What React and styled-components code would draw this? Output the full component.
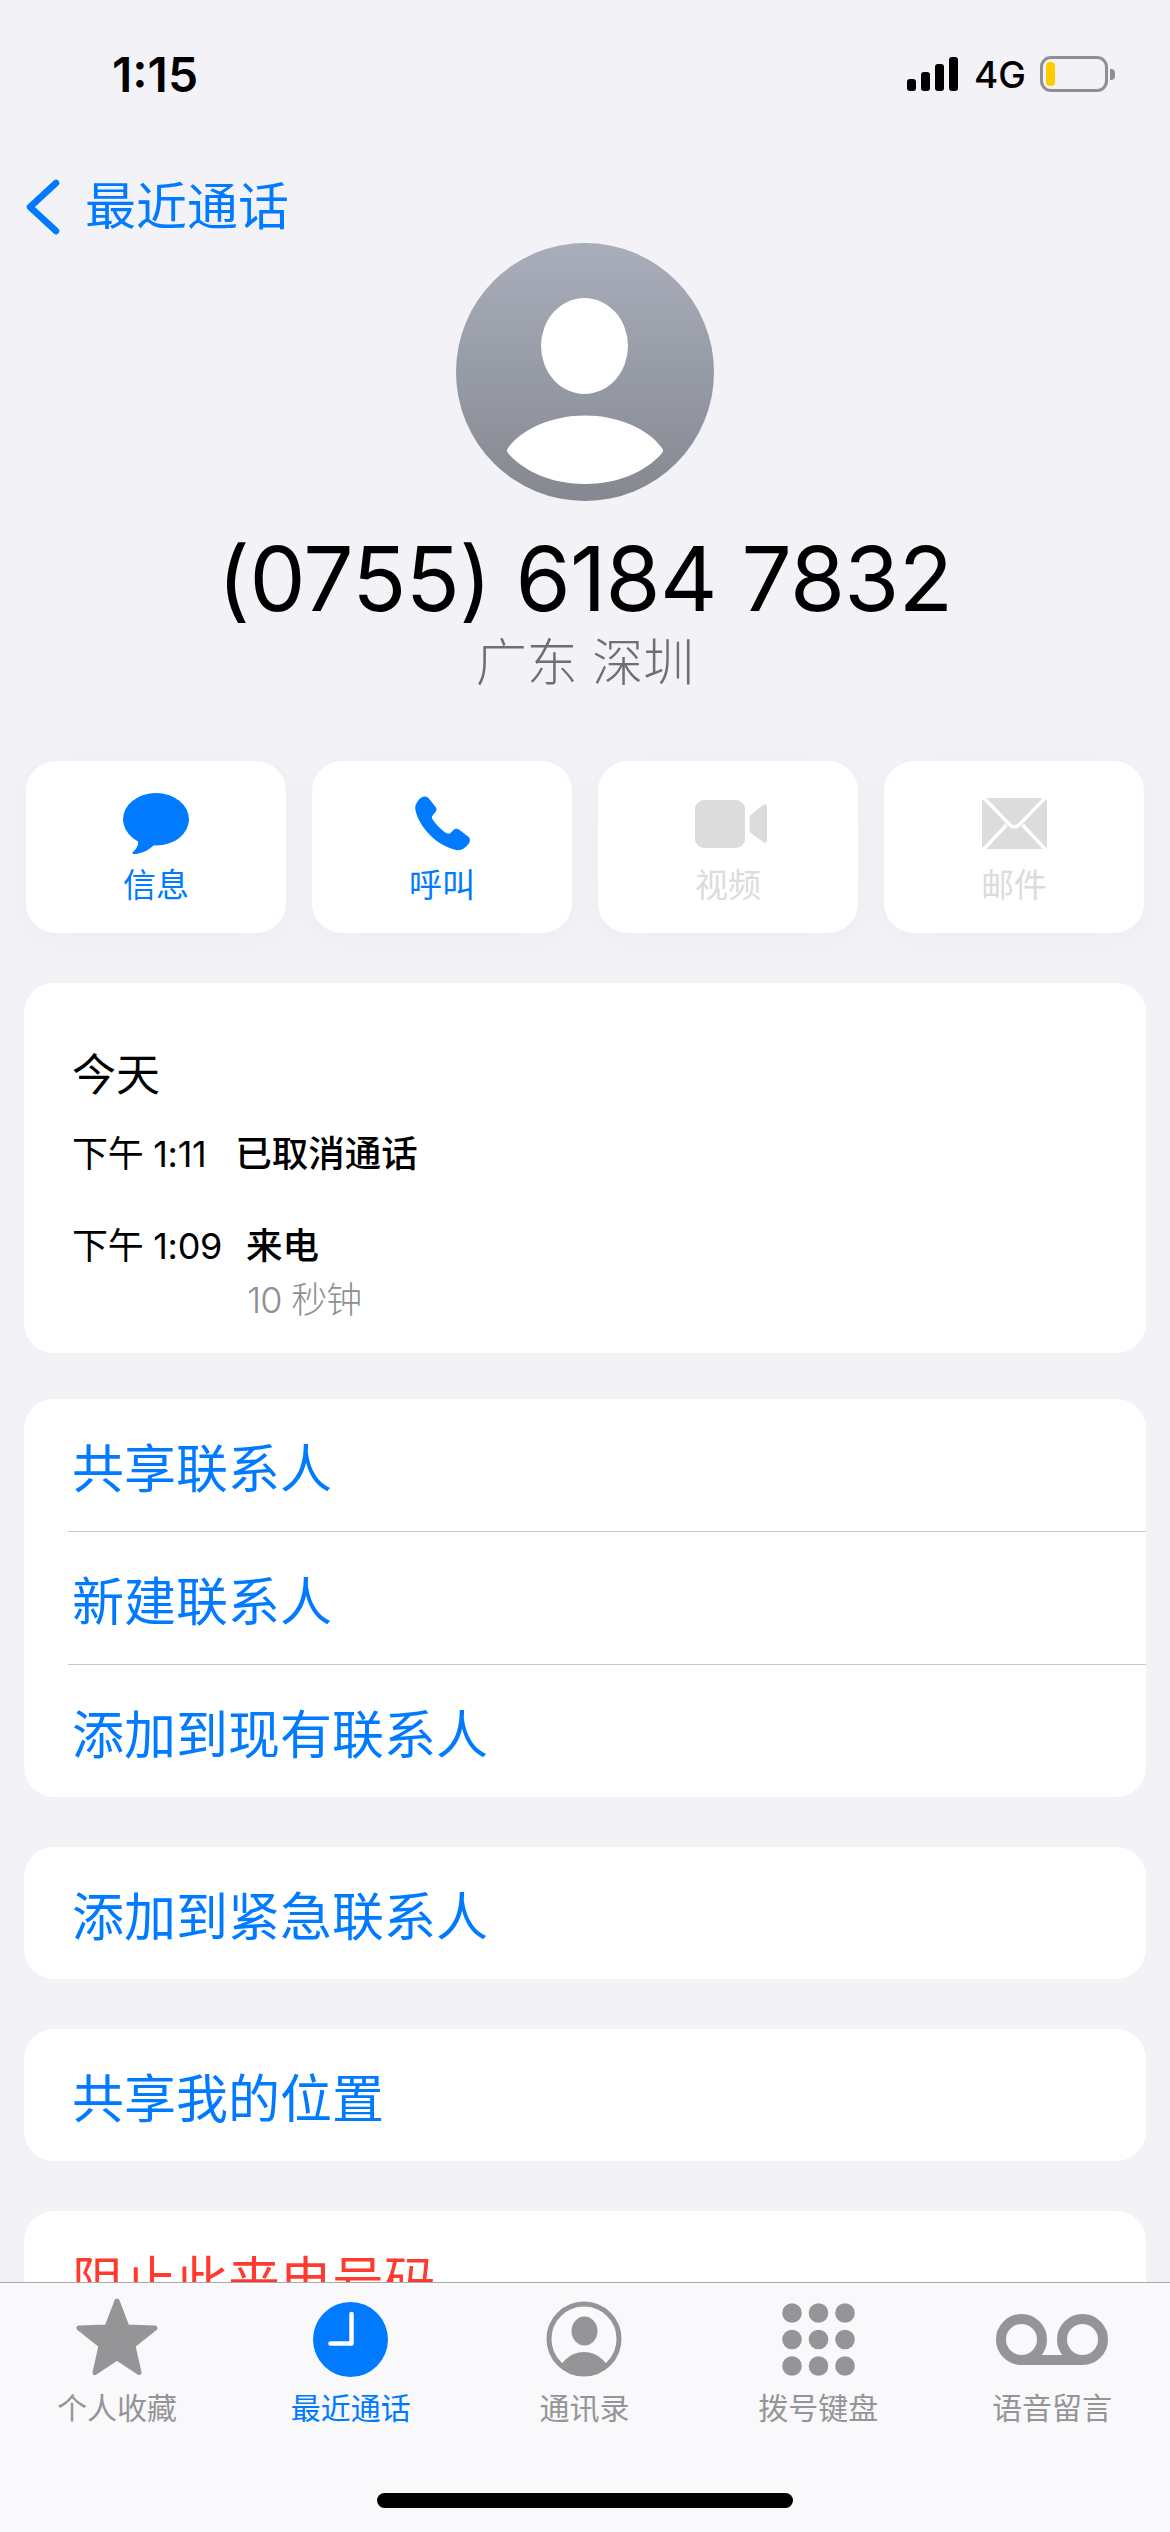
import React from 'react'
import styled, { createGlobalStyle } from 'styled-components'

const blue = '#007aff'
const tabGrey = '#959597'
const disabled = '#dcdcdc'

const GlobalStyle = createGlobalStyle`
html, body {
  margin: 0;
  padding: 0;
  background: #f2f2f7;
  font-family: Inter, "Noto Sans CJK SC", sans-serif;
}
`

const Page = styled.div`
position: relative;
width: 1170px;
height: 2532px;
overflow: hidden;
background: #f2f2f7;
`

const StatusBar = styled.div`
height: 148px;
display: flex;
align-items: center;
justify-content: space-between;
padding: 0 62px 0 112px;
box-sizing: border-box;
`

const Time = styled.div`
font-size: 48px;
font-weight: 600;
letter-spacing: 0;
color: #000;
`

const StatusIcons = styled.div`
display: flex;
align-items: center;
`

const Signal = styled.div`
display: flex;
align-items: flex-end;
gap: 5px;
height: 34px;
`

const SignalBar = styled.div`
width: 9px;
height: ${p => p.$h}px;
border-radius: 3px;
background: #000;
`

const Network = styled.div`
margin-left: 16px;
font-size: 37px;
font-weight: 500;
color: #000;
`

const Battery = styled.div`
margin-left: 14px;
width: 68px;
height: 36px;
box-sizing: border-box;
border: 3px solid #8e8e93;
border-radius: 11px;
padding: 3px;
position: relative;
&::after {
  content: '';
  position: absolute;
  right: -10px;
  top: 10px;
  width: 5px;
  height: 11px;
  border-radius: 0 4px 4px 0;
  background: #8e8e93;
}
`

const BatteryFill = styled.div`
width: 9px;
height: 100%;
border-radius: 4px;
background: #ffcc00;
`

const BackRow = styled.div`
margin-top: 31px;
height: 56px;
padding-left: 26px;
display: flex;
align-items: center;
color: ${blue};
`

const BackText = styled.div`
margin-left: 25px;
font-size: 51px;
line-height: 56px;
`

const Hero = styled.div`
margin-top: 8px;
display: flex;
flex-direction: column;
align-items: center;
`

const PhoneNumber = styled.div`
margin-top: 28px;
font-size: 89px;
line-height: 100px;
font-weight: 400;
letter-spacing: -0.6px;
color: #000;
`

const Location = styled.div`
margin-top: 4px;
font-size: 51px;
line-height: 60px;
font-weight: 300;
color: #6f6f73;
`

const Actions = styled.div`
margin-top: 68px;
padding: 0 26px;
display: grid;
grid-template-columns: repeat(4, 1fr);
gap: 26px;
`

const ActionButton = styled.div`
height: 172px;
border-radius: 30px;
background: #fff;
box-shadow: 0 6px 34px rgba(0, 0, 0, 0.03);
color: ${p => (p.$off ? disabled : blue)};
display: flex;
flex-direction: column;
align-items: center;
`

const ActionIcon = styled.div`
height: 83px;
display: flex;
align-items: center;
justify-content: center;
margin-top: 21px;
`

const ActionLabel = styled.div`
font-size: 33px;
line-height: 40px;
font-weight: 400;
`

const Stack = styled.div`
margin-top: 50px;
padding: 0 24px;
display: flex;
flex-direction: column;
gap: 50px;
`

const Card = styled.div`
background: #fff;
border-radius: 30px;
overflow: hidden;
`

const HistoryCard = styled(Card)`
height: 370px;
margin-bottom: -4px;
padding: 65px 0 0 48px;
box-sizing: border-box;
`

const HistoryDay = styled.div`
font-size: 44px;
line-height: 54px;
color: #000;
`

const CallRow = styled.div`
margin-top: ${p => p.$top}px;
display: flex;
align-items: baseline;
font-size: 36px;
line-height: 44px;
color: #000;
`

const CallTime = styled.div`
margin-right: ${p => p.$gap}px;
font-weight: 400;
letter-spacing: -0.3px;
`

const CallType = styled.div`
font-size: 36.5px;
font-weight: 500;
`

const CallLength = styled.div`
margin-top: 10px;
margin-left: 175px;
font-size: 36px;
line-height: 44px;
font-weight: 300;
letter-spacing: -0.8px;
color: #8e8e93;
`

const ListRow = styled.div`
position: relative;
height: ${p => (p.$first ? 132 : 133)}px;
box-sizing: border-box;
display: flex;
align-items: center;
font-size: 52px;
font-weight: 400;
color: ${p => (p.$danger ? '#ff3b30' : blue)};
border-top: ${p => (p.$first ? 'none' : '1px solid #c8c8cc')};
margin-left: ${p => (p.$first ? 0 : 44)}px;
padding-left: ${p => (p.$first ? 48 : 4)}px;
`

const TabBar = styled.div`
position: absolute;
left: 0;
right: 0;
bottom: 0;
height: 250px;
padding-right: 1px;
box-sizing: border-box;
border-top: 1px solid #a9a9ab;
background: #f9f9fb;
display: grid;
grid-template-columns: repeat(5, 1fr);
`

const Tab = styled.div`
display: flex;
flex-direction: column;
align-items: center;
color: ${p => (p.$active ? blue : tabGrey)};
`

const TabIcon = styled.div`
height: 96px;
margin-top: 8px;
display: flex;
align-items: center;
justify-content: center;
`

const TabLabel = styled.div`
font-size: 30px;
line-height: 36px;
margin-top: 3px;
font-weight: 400;
`

const HomeIndicator = styled.div`
position: absolute;
left: 377px;
bottom: 24px;
width: 416px;
height: 15px;
border-radius: 8px;
background: #000;
`

const Avatar = () => (
  <svg width="258" height="258" viewBox="0 0 258 258">
    <defs>
      <linearGradient id="avatarFill" x1="0" y1="0" x2="0" y2="1">
        <stop offset="0" stopColor="#a9aebb" />
        <stop offset="1" stopColor="#858890" />
      </linearGradient>
    </defs>
    <circle cx="129" cy="129" r="129" fill="url(#avatarFill)" />
    <ellipse cx="128.5" cy="103" rx="43.5" ry="48" fill="#fff" />
    <path d="M52 205C66 186 96 172.6 129 172.6C162 172.6 192 186 206 205Q208 208 206 210C190 229 161 241 129 241C97 241 68 229 52 210Q50 208 52 205Z" fill="#fff" />
  </svg>
)

const BubbleIcon = () => (
  <svg width="66" height="62" viewBox="0 0 66 62" fill="currentColor">
    <ellipse cx="33" cy="26.3" rx="33" ry="26.3" />
    <path d="M15 47C16 52 13 56.5 9.5 59.5C9 60.5 10 61.5 12 61C19 60.5 26 57 31 52Z" />
  </svg>
)

const PhoneIcon = () => (
  <svg width="55" height="55" viewBox="0 0 55 55" fill="currentColor">
    <path d="M4 3.5C7 0 11-.5 13.5 2L21 11.5C22 13.5 21.5 15 20 16.5L18 19C16.5 20.5 16.5 22 18 24C21.5 29 26 33.5 31 37C33 38 34.5 38 36 36.5L38.5 34C40 32.5 42 32.5 44 33.5L53 40.5C55.5 42.5 55.5 45.5 53.5 48C50 52.5 46 55 41 54C32 52 22 46.5 15 39C7 31 2 22 .5 14C-.5 10 1.5 6.5 4 3.5Z" />
  </svg>
)

const VideoIcon = () => (
  <svg width="78" height="48" viewBox="-6 0 78 48" fill="currentColor">
    <rect x="0" y="0" width="50" height="48" rx="9" />
    <path d="M54.5 16L68 5C70 3.5 72 4.5 72 7V40C72 42.5 70 43.5 68 42L54.5 32Z" />
  </svg>
)

const MailIcon = () => (
  <svg width="65" height="51" viewBox="0 0 65 51">
    <rect width="65" height="51" rx="3" fill="currentColor" />
    <path d="M1-1L28 27Q32.5 31 37 27L64-1M1 52L24.5 27M64 52L40.5 27" fill="none" stroke="#fff" strokeWidth="3.5" />
  </svg>
)

const StarIcon = () => (
  <svg width="82" height="83" viewBox="0 0 82 83" fill="currentColor" stroke="currentColor" strokeWidth="5" strokeLinejoin="round">
    <path d="M41 3L51 29L79 30L57 47.5L63 74.5L41 60L19 74.5L25 47.5L3 30L31 29Z" />
  </svg>
)

const ClockIcon = () => (
  <svg width="75" height="75" viewBox="0 0 75 75">
    <circle cx="37.5" cy="37.5" r="37.5" fill="currentColor" />
    <path d="M38.5 12V41.5H17.5" fill="none" stroke="#fff" strokeWidth="4.5" strokeLinecap="round" strokeLinejoin="round" />
  </svg>
)

const ContactIcon = () => (
  <svg width="76" height="76" viewBox="0 0 76 76" fill="currentColor">
    <defs>
      <clipPath id="contactClip">
        <circle cx="38" cy="38" r="35" />
      </clipPath>
    </defs>
    <circle cx="38" cy="38" r="35" fill="none" stroke="currentColor" strokeWidth="5" />
    <ellipse cx="38.5" cy="30" rx="13" ry="14.5" />
    <ellipse cx="38" cy="78" rx="27" ry="27" clipPath="url(#contactClip)" />
  </svg>
)

const KeypadIcon = () => (
  <svg width="73" height="73" viewBox="0 0 73 73" fill="currentColor">
    {[10, 36.5, 63].map(cy =>
      [10, 36.5, 63].map(cx => <circle key={cx + '-' + cy} cx={cx} cy={cy} r="9.8" />)
    )}
  </svg>
)

const VoicemailIcon = () => (
  <svg width="112" height="51" viewBox="0 0 112 51" fill="none" stroke="currentColor" strokeWidth="10">
    <circle cx="25.5" cy="25.5" r="20.5" />
    <circle cx="86.5" cy="25.5" r="20.5" />
    <path d="M25.5 46H86.5" />
  </svg>
)

const actions = [
  { label: '信息', icon: <BubbleIcon /> },
  { label: '呼叫', icon: <PhoneIcon /> },
  { label: '视频', icon: <VideoIcon />, off: true },
  { label: '邮件', icon: <MailIcon />, off: true },
]

const tabs = [
  { label: '个人收藏', icon: <StarIcon /> },
  { label: '最近通话', icon: <ClockIcon />, active: true },
  { label: '通讯录', icon: <ContactIcon /> },
  { label: '拨号键盘', icon: <KeypadIcon /> },
  { label: '语音留言', icon: <VoicemailIcon /> },
]

const listGroups = [
  ['共享联系人', '新建联系人', '添加到现有联系人'],
  ['添加到紧急联系人'],
  ['共享我的位置'],
]

export default function App() {
  return (
    <Page>
      <GlobalStyle />
      <StatusBar>
        <Time>1:15</Time>
        <StatusIcons>
          <Signal>
            {[12, 19, 27, 34].map(h => <SignalBar key={h} $h={h} />)}
          </Signal>
          <Network>4G</Network>
          <Battery><BatteryFill /></Battery>
        </StatusIcons>
      </StatusBar>

      <BackRow>
        <svg width="34" height="56" viewBox="0 0 34 56" fill="none" stroke="currentColor" strokeWidth="6.5" strokeLinecap="round" strokeLinejoin="round">
          <path d="M30 4L4 28L30 52" />
        </svg>
        <BackText>最近通话</BackText>
      </BackRow>

      <Hero>
        <Avatar />
        <PhoneNumber>(0755) 6184 7832</PhoneNumber>
        <Location>广东 深圳</Location>
      </Hero>

      <Actions>
        {actions.map(a => (
          <ActionButton key={a.label} $off={a.off}>
            <ActionIcon>{a.icon}</ActionIcon>
            <ActionLabel>{a.label}</ActionLabel>
          </ActionButton>
        ))}
      </Actions>

      <Stack>
        <HistoryCard>
          <HistoryDay>今天</HistoryDay>
          <CallRow $top={30}>
            <CallTime $gap={29}>下午 1:11</CallTime>
            <CallType>已取消通话</CallType>
          </CallRow>
          <CallRow $top={48}>
            <CallTime $gap={24}>下午 1:09</CallTime>
            <CallType>来电</CallType>
          </CallRow>
          <CallLength>10 秒钟</CallLength>
        </HistoryCard>

        {listGroups.map(group => (
          <Card key={group[0]}>
            {group.map((row, i) => (
              <ListRow key={row} $first={i === 0}>{row}</ListRow>
            ))}
          </Card>
        ))}

        <Card>
          <ListRow $first $danger>阻止此来电号码</ListRow>
        </Card>
      </Stack>

      <TabBar>
        {tabs.map(t => (
          <Tab key={t.label} $active={t.active}>
            <TabIcon>{t.icon}</TabIcon>
            <TabLabel>{t.label}</TabLabel>
          </Tab>
        ))}
      </TabBar>
      <HomeIndicator />
    </Page>
  )
}
